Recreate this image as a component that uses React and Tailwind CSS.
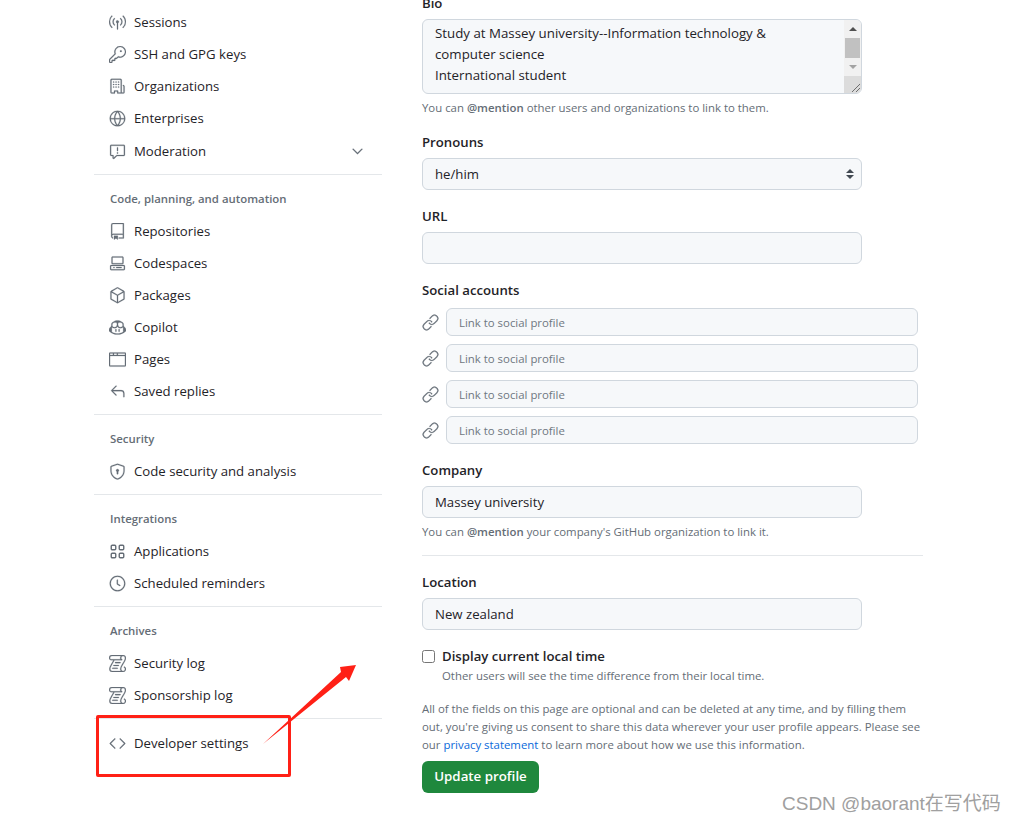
import {
  GoBroadcast, GoKey, GoOrganization, GoGlobe, GoReport, GoRepo, GoCodespaces, GoPackage,
  GoCopilot, GoBrowser, GoReply, GoShieldLock, GoClock, GoLog, GoCode, GoLink, GoChevronDown,
} from 'react-icons/go';

const AppsIcon = ({ className }) => (
  <svg className={className} viewBox="0 0 17 17" fill="none" stroke="currentColor" strokeWidth="1.4">
    <rect x="2.25" y="2.25" width="4.5" height="4.5" rx="1" />
    <rect x="10.25" y="2.25" width="4.5" height="4.5" rx="1" />
    <rect x="2.25" y="10.25" width="4.5" height="4.5" rx="1" />
    <rect x="10.25" y="10.25" width="4.5" height="4.5" rx="1" />
  </svg>
);

const groups = [
  {
    items: [
      ['Sessions', GoBroadcast],
      ['SSH and GPG keys', GoKey],
      ['Organizations', GoOrganization],
      ['Enterprises', GoGlobe],
      ['Moderation', GoReport, true],
    ],
  },
  {
    title: 'Code, planning, and automation',
    items: [
      ['Repositories', GoRepo],
      ['Codespaces', GoCodespaces],
      ['Packages', GoPackage],
      ['Copilot', GoCopilot],
      ['Pages', GoBrowser],
      ['Saved replies', GoReply],
    ],
  },
  { title: 'Security', items: [['Code security and analysis', GoShieldLock]] },
  {
    title: 'Integrations',
    items: [
      ['Applications', AppsIcon],
      ['Scheduled reminders', GoClock],
    ],
  },
  {
    title: 'Archives',
    items: [
      ['Security log', GoLog],
      ['Sponsorship log', GoLog],
    ],
  },
  { items: [['Developer settings', GoCode]] },
];

const Label = ({ children, className = '' }) => (
  <div className={`h-[20px] leading-[20px] text-[13.2px] font-semibold text-[#1f2328] ${className}`}>{children}</div>
);

const Note = ({ children, className = '' }) => (
  <p className={`text-[11.4px] leading-[18px] text-[#656d76] ${className}`}>{children}</p>
);

const inputClass =
  'block w-[440px] h-[32px] px-[12px] rounded-[6px] border border-[#d0d7de] bg-[#f6f8fa] text-[13.2px] text-[#1f2328] outline-none';

const Sidebar = () => (
  <nav className="w-[288px] pt-[6px] shrink-0">
    {groups.map((group, i) => (
      <div key={i} className={i > 0 ? 'border-t border-[#e4e7ea]' : ''}>
        {group.title && (
          <div className="h-[40px] pt-[16px] pl-[16px] text-[11.4px] leading-[16px] font-semibold text-[#656d76]">
            {group.title}
          </div>
        )}
        <div className={i === 5 ? 'pt-[8px]' : 'pb-[7px]'}>
          {group.items.map(([name, Icon, chevron]) => (
            <div
              key={name}
              className={`flex items-center pl-[16px] pr-[16px] text-[13.2px] text-[#1f2328] ${chevron ? 'h-[33px] pt-[1px]' : 'h-[32px]'}`}
            >
              <Icon strokeWidth={0.3} className="w-[17px] h-[17px] -ml-[1px] mr-[8px] text-[#656d76] shrink-0" />
              <span className="flex-1 pt-[1px]">{name}</span>
              {chevron && <GoChevronDown strokeWidth={0.3} className="w-[17px] h-[17px] text-[#656d76]" />}
            </div>
          ))}
        </div>
      </div>
    ))}
  </nav>
);

const BioBox = () => (
  <div className="flex w-[440px] h-[75px] rounded-[6px] border border-[#d0d7de] bg-[#f6f8fa] overflow-hidden">
    <div className="flex-1 pl-[12px] pt-[3px] text-[13.3px] leading-[21px] text-[#1f2328]">
      Study at Massey university--Information technology &amp;
      <br />
      computer science
      <br />
      International student
    </div>
    <div className="w-[17px] flex flex-col bg-[#f1f1f1]">
      <div className="h-[18px] flex items-center justify-center">
        <div className="w-0 h-0 border-x-[4px] border-x-transparent border-b-[4px] border-b-[#505050]" />
      </div>
      <div className="h-[20px] mx-[1px] bg-[#c1c1c1]" />
      <div className="h-[18px] flex items-center justify-center">
        <div className="w-0 h-0 border-x-[4px] border-x-transparent border-t-[4px] border-t-[#a3a3a3]" />
      </div>
      <div className="flex-1 bg-[#dcdcdc] flex items-end justify-end">
        <svg width="10" height="10" viewBox="0 0 10 10" stroke="#6e6e6e" fill="none">
          <path d="M1 9 9 1M5 9 9 5" />
        </svg>
      </div>
    </div>
  </div>
);

const ProfileForm = () => (
  <main className="w-[501px] ml-[40px] -mt-[6px] shrink-0">
    <Label className="-translate-y-[1px]">Bio</Label>
    <div className="mt-[5px]">
      <BioBox />
    </div>
    <Note className="mt-[5px]">
      You can <span className="font-semibold">@mention</span> other users and organizations to link to them.
    </Note>

    <Label className="mt-[15px]">Pronouns</Label>
    <div className="relative w-[440px] mt-[6px]">
      <select defaultValue="he/him" className={`${inputClass} appearance-none pt-[1px]`}>
        <option>he/him</option>
      </select>
      <svg className="absolute right-[8px] top-[10px]" width="8" height="12" viewBox="0 0 8 12" fill="#424a53">
        <path d="M4 1 8 5H0ZM4 11 0 7H8Z" />
      </svg>
    </div>

    <Label className="mt-[16px]">URL</Label>
    <input className={`${inputClass} mt-[6px]`} />

    <Label className="mt-[16px]">Social accounts</Label>
    <div className="mt-[8px] flex flex-col gap-[8px]">
      {[0, 1, 2, 3].map((n) => (
        <div key={n} className="flex items-center w-[496px]">
          <GoLink strokeWidth={0.3} className="w-[17px] h-[17px] text-[#656d76] mr-[7px] shrink-0" />
          <input
            placeholder="Link to social profile"
            className="flex-1 h-[28px] px-[12px] rounded-[6px] border border-[#d0d7de] bg-[#f6f8fa] text-[11.4px] placeholder:text-[#6e7781] outline-none"
          />
        </div>
      ))}
    </div>

    <Label className="mt-[16px]">Company</Label>
    <input defaultValue="Massey university" className={`${inputClass} mt-[6px]`} />
    <Note className="mt-[5px]">
      You can <span className="font-semibold">@mention</span> your company's GitHub organization to link it.
    </Note>

    <div className="mt-[14px] border-t border-[#e4e7ea]" />

    <Label className="mt-[16px]">Location</Label>
    <input defaultValue="New zealand" className={`${inputClass} mt-[6px]`} />

    <div className="mt-[16px] flex items-center h-[20px]">
      <input type="checkbox" className="w-[13px] h-[13px] m-0 mr-[7px]" />
      <Label>Display current local time</Label>
    </div>
    <Note className="ml-[20px] mt-[1px]">Other users will see the time difference from their local time.</Note>

    <Note className="mt-[15px]">
      All of the fields on this page are optional and can be deleted at any time, and by filling them
      <br />
      out, you're giving us consent to share this data wherever your user profile appears. Please see
      <br />
      our <span className="text-[#0969da]">privacy statement</span> to learn more about how we use this information.
    </Note>

    <button className="mt-[7px] h-[32px] w-[117px] rounded-[6px] bg-[#1f883d] text-white text-[13.3px] font-semibold">
      Update profile
    </button>
  </main>
);

const Annotations = () => (
  <>
    <div className="absolute left-[96px] top-[715px] w-[195px] h-[62px] border-[3px] border-[#ff2016] rounded-[2px]" />
    <svg className="absolute left-0 top-0 pointer-events-none" width="1014" height="823">
      <path d="M263 744 341 672 340 667 356 665 349 681 346 677Z" fill="#ff2016" />
    </svg>
    <div className="absolute left-[782px] top-[791px] text-[19px] leading-[26px] text-[#a0a0a0] whitespace-nowrap [font-family:'Liberation_Sans','Noto_Sans_CJK_SC',sans-serif]">
      CSDN @baorant在写代码
    </div>
  </>
);

export default function App() {
  return (
    <div className="relative w-[1014px] h-[823px] overflow-hidden bg-white [font-family:'Open_Sans','Liberation_Sans',sans-serif]">
      <div className="flex pl-[94px]">
        <Sidebar />
        <ProfileForm />
      </div>
      <Annotations />
    </div>
  );
}
